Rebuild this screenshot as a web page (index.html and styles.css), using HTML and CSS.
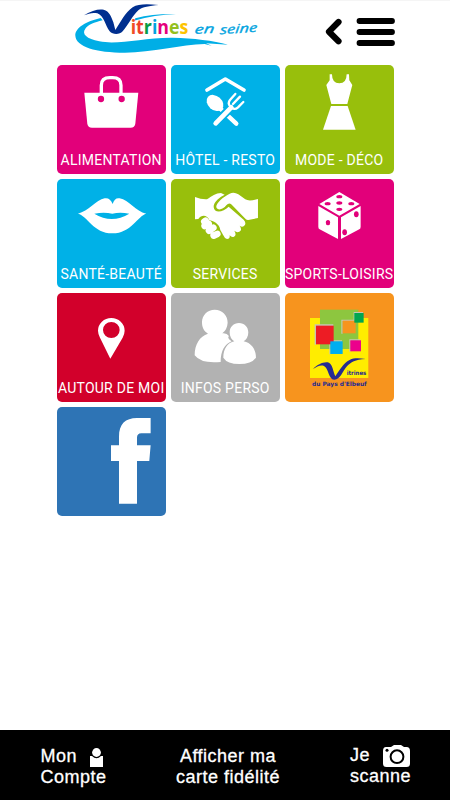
FILE: index.html
```html
<!DOCTYPE html>
<html lang="fr">
<head>
    <meta charset="UTF-8">
    <meta name="viewport" content="width=device-width, initial-scale=1.0">
    <title>Vitrines en Seine</title>
    <link rel="stylesheet" href="styles.css">
</head>
<body>
    <header class="header">
        <svg class="logo" viewBox="0 0 600 180">
            <path fill="#00aee6" d="M92 54C48 64 15 84 16 107C18 140 78 158 165 158C245 158 335 133 404 132L425 137L408 130L474 134C430 122 370 114 308 113C220 112 145 136 88 124C50 116 34 102 46 86C54 75 72 67 98 61Z"/>
            <path fill="#00aee6" d="M196 55C235 44 275 41 318 42C275 44 235 50 192 62Z"/>
            <path fill="#002f8f" d="M42 46C65 31 86 26 101 29C118 34 124 49 130 67L136 90C151 68 165 38 188 22C205 11 232 12 266 15C238 18 218 20 205 31C187 47 175 75 158 94C148 105 128 104 119 94C106 78 102 46 82 40C69 37 56 40 42 46Z"/>
            <text class="logo-name" x="182" y="102" textLength="173" lengthAdjust="spacingAndGlyphs"><tspan fill="#f04e23">i</tspan><tspan fill="#f0402a">t</tspan><tspan fill="#079b48">r</tspan><tspan fill="#00a3e0">i</tspan><tspan fill="#e5007d">n</tspan><tspan fill="#93c01f">e</tspan><tspan fill="#fdc300">s</tspan></text>
            <text class="logo-sub" transform="translate(373 101) rotate(-2) skewX(-8)" textLength="59" lengthAdjust="spacingAndGlyphs">en</text>
            <text class="logo-sub" transform="translate(449 103) rotate(-4) skewX(-8)" textLength="112" lengthAdjust="spacingAndGlyphs">seine</text>
        </svg>
        <svg class="nav" viewBox="0 0 100 64">
            <path d="M28.5 22L19 31.7L28.5 41.3" stroke-width="6.2"/>
            <path d="M49.5 21H82M49.5 32H82M49.5 43H82" stroke-width="5.8"/>
        </svg>
    </header>

    <main class="grid">
        <a class="tile pink">
            <svg viewBox="21 15 328 328">
                <path fill="none" stroke="#fff" stroke-width="10" d="M154 102V76Q154 53 180 53H188Q213 53 213 76V102"/>
                <path d="M103 98H265L256 191Q254 203 242 203H126Q114 203 112 191Z"/>
                <circle class="pink-dot" cx="153" cy="117" r="9.5"/>
                <circle class="pink-dot" cx="215" cy="117" r="9.5"/>
            </svg>
            <span>ALIMENTATION</span>
        </a>
        <a class="tile blue">
            <svg viewBox="18 15 328 328">
                <path class="line" stroke-width="11" d="M126 90L181 57L237 90"/>
                <ellipse cx="150" cy="129" rx="28" ry="21" transform="rotate(42 150 129)"/>
                <path class="line" stroke-width="13" d="M165 145L214 191"/>
                <path class="cut" stroke-width="25" d="M152 189L194 147"/>
                <path class="line" stroke-width="14" d="M152 190L199 142"/>
                <path class="line" stroke-width="7" d="M211 102L195 120Q187 130 196 139L200 143Q209 151 219 142L235 126M225 110L204 132"/>
            </svg>
            <span>HÔTEL - RESTO</span>
        </a>
        <a class="tile green">
            <svg viewBox="15 15 328 328">
                <path d="M149 43H156Q156 70 178 70Q200 70 200 43H207L208 61L217 75L202 132H154L139 75L149 61Z"/>
                <path d="M153 138H203L227 209H129Z"/>
            </svg>
            <span>MODE - DÉCO</span>
        </a>
        <a class="tile blue">
            <svg viewBox="21 15 328 328">
                <path fill-rule="evenodd" d="M84 119C115 112 138 78 164 73Q180 70 188 90Q194 70 209 73C237 78 257 113 289 119C263 125 245 178 187 178C130 178 113 126 84 119ZM133 119Q185 151 238 119Q210 114 187 119Q162 114 133 119Z"/>
            </svg>
            <span>SANTÉ-BEAUTÉ</span>
        </a>
        <a class="tile green">
            <svg viewBox="18 15 328 328">
                <path d="M90 69Q109 77 126 76C140 67 153 57 168 57L179 62C166 68 145 84 146 99C148 119 174 115 191 98L236 137Q246 148 237 156Q231 161 224 155Q233 168 223 173Q216 177 208 170Q216 183 207 188Q200 191 194 184Q196 195 186 195Q179 194 175 184L166 168C164 150 143 139 133 139C128 123 110 120 100 135L90 136Z"/>
                <path d="M279 75V132L250 138Q244 139 239 132L198 90Q191 86 184 94C175 106 160 110 155 102C148 91 174 69 194 59Q207 53 220 61L241 76Q252 83 279 75Z"/>
                <path class="line" stroke-width="20" d="M118 143L122 140M119 156L131 149M132 170L145 161M146 185L157 180"/>
            </svg>
            <span>SERVICES</span>
        </a>
        <a class="tile pink">
            <svg viewBox="15 15 328 328">
                <path d="M178 54L239 90L178 125L118 90ZM115 96L174 130V195L119 166Q115 164 115 158ZM242 96L183 130V195L238 166Q242 164 242 158Z"/>
                <g class="pink-dot">
                    <ellipse cx="178" cy="68" rx="9" ry="5"/>
                    <ellipse cx="178" cy="87" rx="9" ry="5"/>
                    <ellipse cx="178" cy="106" rx="9" ry="5"/>
                    <ellipse cx="143" cy="89" rx="9" ry="5"/>
                    <ellipse cx="214" cy="89" rx="9" ry="5"/>
                    <ellipse cx="144" cy="146" rx="6.5" ry="8"/>
                    <ellipse cx="229" cy="121" rx="7" ry="9"/>
                    <ellipse cx="194" cy="175" rx="7" ry="9"/>
                </g>
            </svg>
            <span>SPORTS-LOISIRS</span>
        </a>
        <a class="tile red">
            <svg viewBox="21 15 328 328">
                <path fill-rule="evenodd" d="M181 212L150 149Q144 137 144 128A40 38 0 0 1 224 128Q224 137 218 149ZM184 102A25 24 0 1 0 184 150A25 24 0 1 0 184 102Z"/>
            </svg>
            <span>AUTOUR DE MOI</span>
        </a>
        <a class="tile grey">
            <svg viewBox="363 15 328 328">
                <path d="M434 202C434 169 449 145 474 137C461 130 456 117 456 103C456 81 473 65 494 65C517 65 533 82 533 104Q532 124 517 136Q530 134 537 144Q530 150 545 160C525 168 512 188 512 222Q454 228 434 202Z"/>
                <path d="M520 209C520 181 534 164 553 160Q539 151 539 133C539 117 551 105 567 105C583 105 595 117 595 133Q595 151 581 160C602 164 618 182 618 209Q604 228 568 228Q532 228 520 209Z"/>
            </svg>
            <span>INFOS PERSO</span>
        </a>
        <a class="tile orange">
            <svg viewBox="15 15 328 328">
                <rect x="90" y="90" width="175" height="180" fill="#ffed00"/>
                <rect x="120" y="65" width="115" height="118" fill="#8dc63f"/>
                <path fill="#c6c6b4" d="M104 109H160V114H108V170H104ZM184 95H225V99H188V137H184ZM148 157H186V161H152V199H148ZM208 154H241V158H212V191H208ZM221 72H249V76H225V104H221Z"/>
                <rect x="108" y="113" width="53" height="56" fill="#ed1c24"/>
                <rect x="188" y="98" width="39" height="38" fill="#f7941e"/>
                <rect x="151" y="160" width="37" height="38" fill="#00aeef"/>
                <rect x="211" y="157" width="32" height="33" fill="#ec008c"/>
                <rect x="223" y="75" width="28" height="29" fill="#00a651"/>
                <path fill="#262b91" d="M99 243C113 228 134 219 147 224C158 230 159 248 166 265C178 248 190 225 209 216C223 209 239 211 257 213C225 215 213 222 201 235C187 251 181 275 163 275C146 276 146 241 132 234C121 230 111 236 99 243Z"/>
                <text class="elbeuf" x="200" y="260" font-size="18" textLength="59" lengthAdjust="spacingAndGlyphs">itrines</text>
                <text class="elbeuf" x="96" y="293" font-size="18" textLength="164" lengthAdjust="spacingAndGlyphs">du Pays d'Elbeuf</text>
            </svg>
        </a>
        <a class="tile facebook">
            <svg viewBox="21 21 328 328">
                <path d="M207 311V183H183V136H207V110C207 72 226 54 261 54H302V100H274Q261 100 261 114V136H302L298 183H261V311Z"/>
            </svg>
        </a>
    </main>

    <footer class="footer">
        <a class="account">
            <div>Mon
                <svg class="person" viewBox="0 0 13 19"><circle cx="6.5" cy="4.5" r="4.4"/><path d="M0 8H2Q6.5 12.5 11 8H13V19H0Z"/></svg>
            </div>
            <div>Compte</div>
        </a>
        <a class="card">Afficher ma<br>carte fidélité</a>
        <a class="scan">
            <div>Je
                <svg class="camera" viewBox="0 0 27 22">
                    <path d="M3 2H8L11 0H18L21 2H23.500Q27 2 27 6V18.500Q27 22 23.500 22H3.500Q0 22 0 18.500V6Q0 2 3 2Z"/>
                    <circle cx="14" cy="11.700" r="6.400" fill="#fff" stroke="#000" stroke-width="2"/>
                    <circle cx="4" cy="5.300" r="1.500" fill="#000"/>
                </svg>
            </div>
            <div>scanne</div>
        </a>
    </footer>
</body>
</html>
```
FILE: styles.css
```css
* { box-sizing: border-box; }
body { margin: 0; height: 800px; display: flex; flex-direction: column; background: #fff; font-family: Roboto, Arial, sans-serif; overflow: hidden; }
svg { display: block; fill: #fff; }

/* En-tête */
.header { height: 65px; flex: none; display: flex; padding-left: 70px; border-top: 1px solid #f5f5f5; }
.logo { width: 200px; height: 60px; margin-top: -1px; }
.logo-name { font: bold 59px "Open Sans", sans-serif; }
.logo-sub { font: italic 37px "Open Sans", sans-serif; fill: #00a3e0; stroke: #00a3e0; stroke-width: 1; }
.nav { width: 100px; height: 64px; margin: -1px 0 0 40px; fill: none; stroke: #000; stroke-linecap: round; stroke-linejoin: round; }

/* Grille des rubriques */
.grid { flex: 1; display: grid; grid-template-columns: repeat(3, 109.3px); grid-auto-rows: 109.3px; gap: 4.7px; padding-left: 56.8px; align-content: start; }
.tile { position: relative; border-radius: 5px; overflow: hidden; color: #fff; }
.tile svg { width: 100%; height: 100%; }
.tile span { position: absolute; left: -10px; right: -9.5px; bottom: 6px; font-size: 14px; line-height: 16px; letter-spacing: 0.25px; text-align: center; white-space: nowrap; }
.pink { background: #e2007a; }
.blue { background: #00b1e7; }
.green { background: #98bf0c; }
.red { background: #d2002b; }
.grey { background: #b2b2b2; }
.orange { background: #f7941e; }
.facebook { background: #2e74b5; }
.pink-dot { fill: #e2007a; }
.line { fill: none; stroke: #fff; stroke-linecap: round; stroke-linejoin: round; }
.cut { fill: none; stroke: #00b1e7; }
.elbeuf { font-family: "DejaVu Sans", sans-serif; font-weight: bold; fill: #262b91; }

/* Barre du bas */
.footer { height: 70px; flex: none; display: flex; background: #000; color: #fff; font-family: "Liberation Sans", Arial, sans-serif; font-size: 18px; line-height: 21px; letter-spacing: 0.5px; padding-top: 16px; -webkit-text-stroke: 0.3px #fff; }
.footer div { display: flex; }
.account { width: 150px; padding-left: 40.5px; }
.card { width: 156px; text-align: center; }
.scan { padding-left: 44px; margin-top: -1px; }
.person { width: 13px; height: 19px; margin: 2px 0 0 13px; }
.camera { width: 27px; height: 22px; margin: 0 0 -1px 13px; }
```
